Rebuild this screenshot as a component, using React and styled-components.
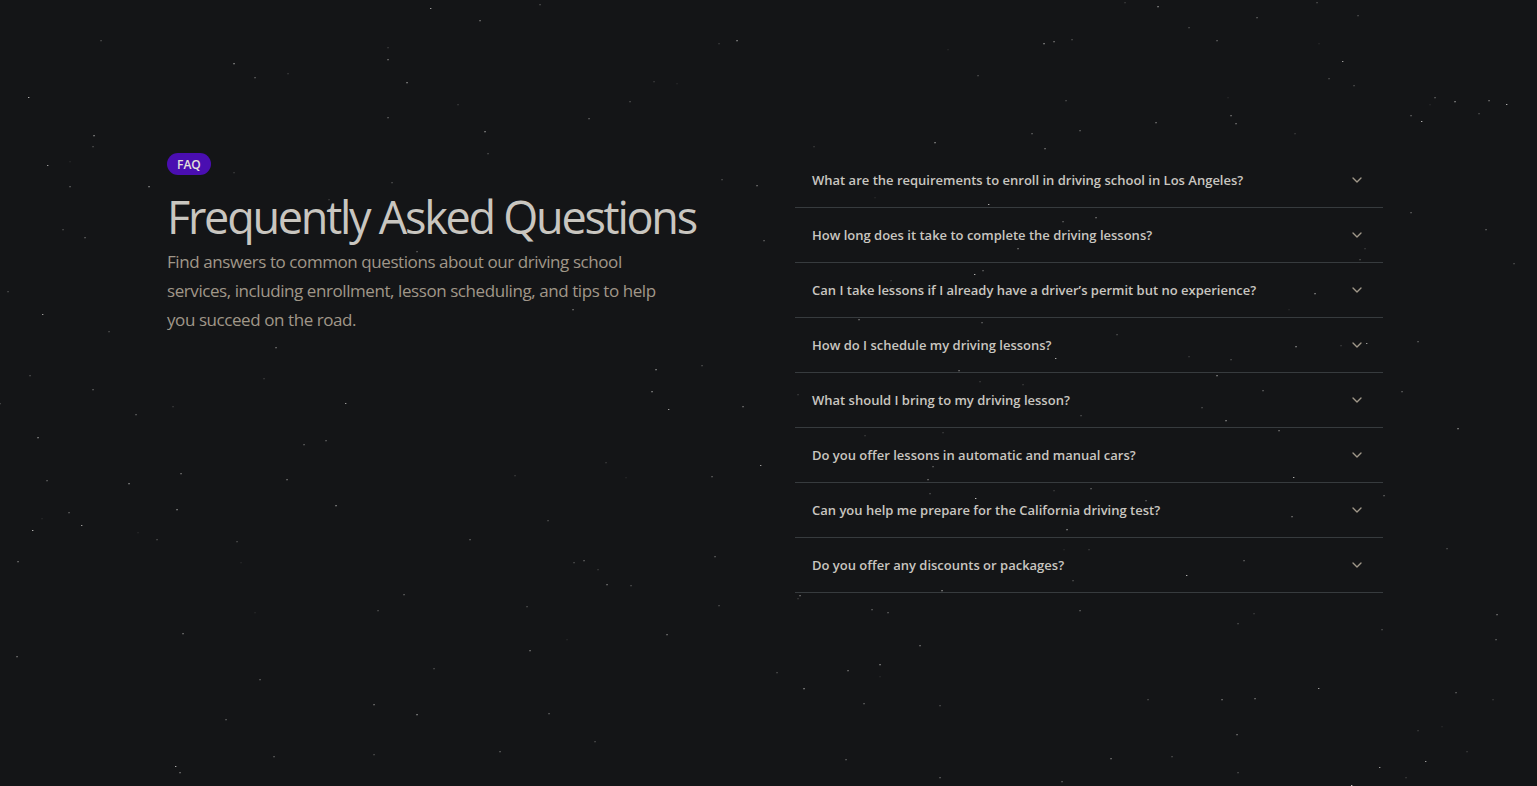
import React from "react";
import styled, { createGlobalStyle } from "styled-components";
import { ChevronDown } from "lucide-react";

const GlobalStyle = createGlobalStyle`
  *, *::before, *::after { box-sizing: border-box; }
  body {
    margin: 0;
    background: #141517;
    font-family: "Open Sans", "Noto Sans", sans-serif;
  }
`;

const Page = styled.main`
  position: relative;
  min-height: 100vh;
  padding: 153px 0 40px 13px;
  background: #141517;
  overflow: hidden;
`;

const StarField = styled.svg`
  position: absolute;
  inset: 0;
  width: 100%;
  height: 100%;
  pointer-events: none;
`;

const Columns = styled.div`
  position: relative;
  display: grid;
  grid-template-columns: repeat(2, minmax(0, 1fr));
  gap: 40px;
  max-width: 1216px;
  margin: 0 auto;

  @media (max-width: 900px) {
    grid-template-columns: minmax(0, 1fr);
    padding: 0 24px;
  }
`;

const Intro = styled.header`
  display: flex;
  flex-direction: column;
  align-items: flex-start;
`;

const Badge = styled.span`
  padding: 2px 10px 0;
  border-radius: 11px;
  background: #4a0eb1;
  color: #e4e1dc;
  font-size: 12px;
  font-weight: 600;
  line-height: 20px;
`;

const Title = styled.h2`
  margin: 18px 0 0;
  color: #c9c6c0;
  font-size: 45px;
  font-weight: 400;
  line-height: 48px;
  letter-spacing: -0.05em;
`;

const Lead = styled.p`
  max-width: 512px;
  margin: 6px 0 0;
  color: #a09789;
  font-size: 17px;
  line-height: 29px;
  letter-spacing: -0.025em;
`;

const QuestionList = styled.ul`
  margin: 0;
  padding: 0;
  list-style: none;
`;

const QuestionItem = styled.li`
  border-bottom: 1px solid #373b3e;
`;

const QuestionButton = styled.button`
  display: flex;
  align-items: center;
  justify-content: space-between;
  width: 100%;
  padding: 16px 18px 16px 17px;
  border: 0;
  background: transparent;
  color: #c9c6c0;
  font: inherit;
  font-size: 13px;
  font-weight: 600;
  line-height: 22px;
  text-align: left;
  cursor: pointer;
`;

const Chevron = styled(ChevronDown)`
  flex: none;
  color: #a09789;
`;

const questions = [
  "What are the requirements to enroll in driving school in Los Angeles?",
  "How long does it take to complete the driving lessons?",
  "Can I take lessons if I already have a driver’s permit but no experience?",
  "How do I schedule my driving lessons?",
  "What should I bring to my driving lesson?",
  "Do you offer lessons in automatic and manual cars?",
  "Can you help me prepare for the California driving test?",
  "Do you offer any discounts or packages?",
];

// Each star is [x, y, brightness from 1 to 9].
const stars = [
  [101,40,3],[28,97,8],[94,135,6],[234,63,6],[255,77,4],[288,73,2],[388,47,2],[388,59,5],[388,117,4],
  [430,8,7],[480,20,5],[540,4,3],[407,82,6],[458,104,2],[485,131,6],[589,118,4],[630,101,3],[654,81,2],[719,43,2],[737,40,6],[677,83,1],
  [1125,2,2],[1158,6,6],[1317,2,3],[1358,15,3],[1257,17,4],[1189,27,3],[1217,40,4],[1044,43,6],[1054,41,5],[1072,39,3],[948,49,1],
  [978,75,3],[1319,43,1],[1342,61,7],[1329,78,3],[1354,85,3],[1066,100,3],[1228,97,1],[1231,115,5],[1236,123,5],[1156,122,5],
  [1080,130,4],[1032,133,4],[935,142,6],[1045,148,5],[814,146,2],[1295,133,2],[1435,97,4],[1455,101,6],[1489,100,5],[1506,104,8],
  [1411,115,4],[1421,121,8],[1479,113,3],[1430,104,1],
  [93,146,3],[47,165,7],[70,161,1],[70,186,4],[149,186,6],[63,229,3],[85,237,4],[8,291,3],[42,314,7],[109,331,3],[234,172,2],
  [392,182,3],[276,347,5],[264,378,2],[30,375,3],[93,389,4],[0,403,3],[136,414,4],[173,406,2],[345,403,7],[38,437,6],[304,444,4],
  [326,440,4],[417,251,4],[329,199,2],[488,153,3],[722,179,3],[757,185,5],[764,240,4],[573,309,5],
  [181,473,5],[47,480,4],[129,483,6],[287,479,5],[515,475,2],[69,512,4],[177,509,6],[336,505,6],[32,530,8],[81,525,7],[42,518,1],
  [138,532,1],[157,539,3],[237,541,3],[548,520,3],[470,539,4],[18,561,5],[241,562,1],[574,562,3],[584,560,4],[598,569,2],[404,594,4],
  [378,610,3],[255,612,1],[527,606,3],[183,633,5],[17,656,5],[260,679,4],[530,650,5],[434,668,3],[567,639,1],[374,704,5],[417,714,6],
  [549,713,4],[226,719,4],[595,741,3],[274,756,4],[374,754,3],[500,751,4],[175,766,8],[180,772,5],
  [656,369,6],[702,365,3],[652,391,6],[668,409,7],[743,406,5],[606,462,2],[626,477,1],[712,476,4],[760,465,7],[715,556,4],[607,584,5],
  [631,585,3],[719,605,3],[667,634,5],[777,672,3],[804,688,6],[848,670,5],[880,664,6],[880,676,1],[920,645,5],[872,609,4],[888,612,4],
  [864,703,4],[940,705,3],[846,759,4],[940,777,4],[1062,781,4],[800,595,5],[798,598,2],[798,394,2],[959,370,5],[980,381,2],
  [1023,384,2],[1055,358,8],[865,435,2],[943,432,2],[933,466,4],[928,479,5],[930,493,3],[975,498,9],[1054,490,2],[1091,488,4],
  [1067,529,6],[1064,549,1],[1089,549,2],[1073,580,3],[942,590,6],[1080,610,4],[1081,415,3],
  [1254,613,2],[1238,623,3],[1382,629,3],[1497,614,5],[1496,639,4],[1318,688,7],[1148,699,3],[1222,699,5],[1255,698,5],[1456,692,4],
  [1493,699,2],[1237,734,5],[1418,730,2],[1442,726,1],[1111,758,5],[1172,756,3],[1238,772,3],[1379,767,7],[1425,761,7],[1406,777,2],
  [1467,751,2],[1351,785,9],
  [988,204,8],[1063,221,4],[1018,248,5],[983,270,4],[974,274,8],[891,280,2],[875,197,1],[1096,217,5],[859,319,5],[982,322,4],
  [1117,334,3],[1146,500,4],[1365,248,2],[1360,259,3],[1315,293,6],[1289,309,1],[1296,346,6],[1366,343,7],[1341,345,2],[1189,356,2],
  [1231,359,3],[1217,375,6],[1411,212,4],[1486,229,4],[1514,263,3],[1418,341,4],[1402,391,4],[1458,428,6],[1263,390,4],[1226,420,6],
  [1202,407,3],[1279,430,5],[1293,477,8],[1292,516,5],[1384,495,4],[1244,560,4],[1186,575,8],[1447,548,3],
];

// Bright stars are a sharp point; dimmer ones spread over a two pixel square.
function Star({ x, y, level }) {
  if (level > 6) {
    return (
      <g fill="#e8e6e3">
        <rect x={x} y={y} width="1" height="1" opacity={level / 11} />
        <rect x={x + 1} y={y} width="1" height="1" opacity={level / 30} />
      </g>
    );
  }
  return (
    <g fill="#e8e6e3">
      <rect x={x - 1} y={y} width="1" height="1" opacity={level / 16} />
      <rect x={x} y={y} width="1" height="1" opacity={level / 14} />
      <rect x={x - 1} y={y + 1} width="2" height="1" opacity={level / 50} />
    </g>
  );
}

function Stars() {
  return (
    <StarField aria-hidden="true">
      {stars.map(([x, y, level]) => (
        <Star key={`${x}-${y}`} x={x} y={y} level={level} />
      ))}
    </StarField>
  );
}

export default function App() {
  return (
    <>
      <GlobalStyle />
      <Page>
        <Stars />
        <Columns>
          <Intro>
            <Badge>FAQ</Badge>
            <Title>Frequently Asked Questions</Title>
            <Lead>
              Find answers to common questions about our driving school
              services, including enrollment, lesson scheduling, and tips to
              help you succeed on the road.
            </Lead>
          </Intro>
          <QuestionList>
            {questions.map((question) => (
              <QuestionItem key={question}>
                <QuestionButton type="button" aria-expanded="false">
                  {question}
                  <Chevron size={16} aria-hidden="true" />
                </QuestionButton>
              </QuestionItem>
            ))}
          </QuestionList>
        </Columns>
      </Page>
    </>
  );
}
